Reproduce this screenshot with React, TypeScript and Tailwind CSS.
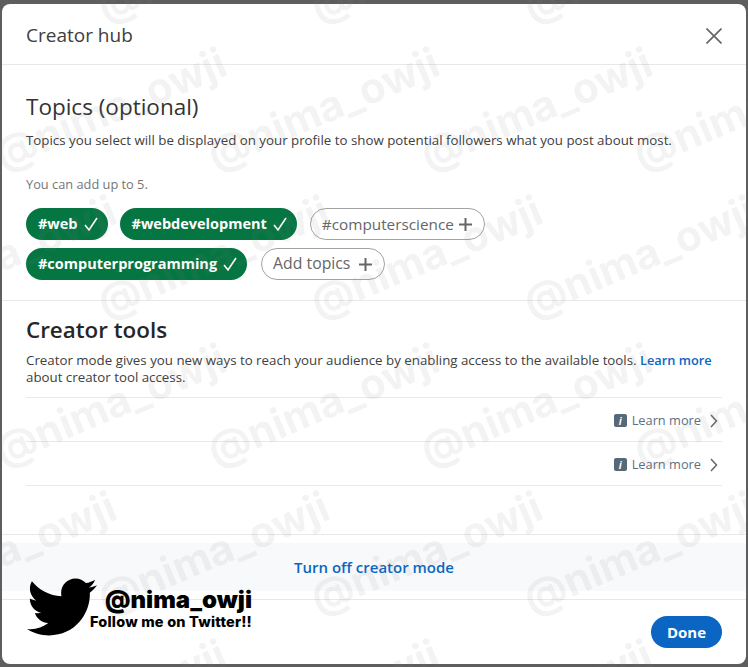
import { FaTwitter } from 'react-icons/fa';

// watermark lattice: rows are about 148px apart, every other row shifted by half a step
const marks: { x: number; y: number }[] = [];
for (let row = 0; row < 6; row++) {
  const start = row % 2 === 0 ? 0 : 110;
  for (let col = 0; col < 4; col++) {
    marks.push({ x: start + 213 * col, y: -40 + row * 148 });
  }
}

function Check() {
  return (
    <svg width="16" height="16" viewBox="0 0 16 16" fill="none" stroke="currentColor" strokeWidth="1.6" className="ml-[5px] shrink-0">
      <path d="M2 9 L6 14 L14 2" />
    </svg>
  );
}

function Plus() {
  return (
    <svg width="13" height="13" viewBox="0 0 13 13" fill="none" stroke="currentColor" strokeWidth="2" className="shrink-0">
      <path d="M6.5 0 V13 M0 6.5 H13" />
    </svg>
  );
}

function ChipOn({ label }: { label: string }) {
  return (
    <span className="flex h-8 items-center rounded-full bg-[#057642] pl-3 pr-[9px] text-[14.5px] font-bold text-white">
      {label}
      <Check />
    </span>
  );
}

function ChipOff({ label, extra }: { label: string; extra: string }) {
  return (
    <span className={`flex h-8 items-center rounded-full border border-[#a3a3a3] pl-[11px] pr-3 text-[#666666] ${extra}`}>
      {label}
      <Plus />
    </span>
  );
}

function ToolRow() {
  return (
    <div className="flex h-11 items-center justify-end border-b border-[#e8e8e8] pr-1 pt-[2px]">
      <span className="flex h-[13px] w-[13px] items-center justify-center rounded-[2px] bg-[#56687a] text-[10px] font-bold italic leading-none text-white">i</span>
      <span className="ml-[5px] text-[12.8px] text-[#5e6f80]">Learn more</span>
      <svg width="8" height="14" viewBox="0 0 8 14" fill="none" stroke="#666666" strokeWidth="1.5" className="ml-[9px]">
        <path d="M1 1 L6.5 7 L1 13" />
      </svg>
    </div>
  );
}

export default function App() {
  return (
    <div className="relative h-[667px] w-[748px] overflow-hidden bg-[#5e5e5e] font-['Open_Sans',sans-serif]">
      <div className="ml-[2px] w-[744px] pt-1">
        <div className="relative h-[660px] rounded-lg bg-white">
          {/* Header */}
          <div className="flex h-[61px] items-center justify-between border-b border-[#e8e8e8] pl-6 pr-6 pt-[3px]">
            <h2 className="text-[19px] text-[#404040]">Creator hub</h2>
            <svg width="16" height="16" viewBox="0 0 16 16" fill="none" stroke="#666666" strokeWidth="1.6">
              <path d="M0.5 0.5 L15.5 15.5 M15.5 0.5 L0.5 15.5" />
            </svg>
          </div>

          {/* Topics */}
          <div className="h-[236px] border-b border-[#e8e8e8] px-6 pt-[27px]">
            <h3 className="text-[22.5px] leading-[30px] text-[#333333]">Topics (optional)</h3>
            <p className="mt-[9px] whitespace-nowrap text-[13.3px] leading-[18px] text-[#404040]">
              Topics you select will be displayed on your profile to show potential followers what you post about most.
            </p>
            <p className="mt-[26px] text-[12.8px] leading-[18px] text-[#767676]">You can add up to 5.</p>
            <div className="mt-[15px] flex flex-col gap-2">
              <div className="flex gap-3">
                <ChipOn label="#web" />
                <ChipOn label="#webdevelopment" />
                <ChipOff label="#computerscience" extra="ml-px gap-[5px] text-[15.3px]" />
              </div>
              <div className="flex gap-3">
                <ChipOn label="#computerprogramming" />
                <ChipOff label="Add topics" extra="ml-[2px] gap-[9px] text-[15.8px]" />
              </div>
            </div>
          </div>

          {/* Creator tools */}
          <div className="px-6 pt-[14px]">
            <h3 className="text-[22.4px] font-semibold leading-[30px] text-[#262626]">Creator tools</h3>
            <p className="mt-[7px] border-b border-[#e8e8e8] pb-[11px] text-[13.3px] leading-[17px] text-[#404040]">
              Creator mode gives you new ways to reach your audience by enabling access to the available tools.{' '}
              <span className="text-[12.8px] font-semibold text-[#0a66c2]">Learn more</span> about creator tool access.
            </p>
            <ToolRow />
            <ToolRow />
          </div>

          {/* Turn off */}
          <div className="mt-[48px] border-t border-[#e8e8e8] pt-2">
            <div className="flex h-12 items-center justify-center bg-[#f8f9fb] text-[15px] font-semibold text-[#0a66c2]">
              Turn off creator mode
            </div>
          </div>

          {/* Footer */}
          <div className="mt-2 flex h-[65px] items-start justify-end border-t border-[#e8e8e8] pr-6 pt-4">
            <button className="h-8 w-[71px] rounded-full bg-[#0a66c2] text-[15px] font-bold text-white">Done</button>
          </div>
        </div>
      </div>

      {/* Watermarks */}
      <div className="pointer-events-none absolute inset-0 overflow-hidden">
        {marks.map((m, i) => (
          <span
            key={i}
            className="absolute -translate-x-1/2 -translate-y-1/2 -rotate-[23deg] whitespace-nowrap font-['Inter',sans-serif] text-[42px] font-bold text-[#8080801a]"
            style={{ left: m.x, top: m.y }}
          >
            @nima_owji
          </span>
        ))}
      </div>

      {/* Twitter badge */}
      <div className="absolute left-[27px] top-[572px] flex items-start">
        <FaTwitter className="h-[70px] w-[70px] text-black" />
        <div className="ml-[-7px] mt-[15px] flex flex-col items-end font-['Inter',sans-serif] text-black">
          <span className="text-[24px] font-black leading-[26px]">@nima_owji</span>
          <span className="whitespace-nowrap text-[14.5px] font-extrabold leading-[18px] tracking-[0.2px]">Follow me on Twitter!!</span>
        </div>
      </div>
    </div>
  );
}
